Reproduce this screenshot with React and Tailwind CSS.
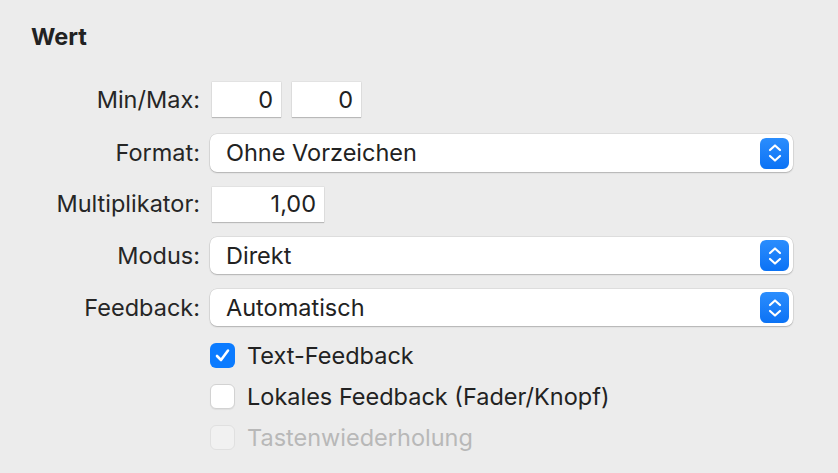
import React from "react";

const font = { fontFamily: "Inter, 'Liberation Sans', sans-serif" };

function Stepper() {
  return (
    <div className="w-[29px] h-[31px] rounded-[6px] bg-gradient-to-b from-[#2a8dfd] to-[#0a72f5] flex items-center justify-center">
      <svg width="16" height="22" viewBox="0 0 16 22" fill="none">
        <path d="M3 8 L8 3.5 L13 8" stroke="white" strokeWidth="2.2" strokeLinecap="round" strokeLinejoin="round" />
        <path d="M3 14 L8 18.5 L13 14" stroke="white" strokeWidth="2.2" strokeLinecap="round" strokeLinejoin="round" />
      </svg>
    </div>
  );
}

function Select({ value, height = "h-[38px]" }) {
  return (
    <div className={`${height} w-[583px] bg-white rounded-[7px] shadow-[0_0_0_0.5px_rgba(0,0,0,0.12),0_1px_1.5px_rgba(0,0,0,0.2)] flex items-center justify-between pl-[16px] pr-[4px]`}>
      <span className="text-[23.5px] text-[#222]">{value}</span>
      <Stepper />
    </div>
  );
}

function NumField({ value, width }) {
  return (
    <div className={`${width} h-[35px] bg-white shadow-[0_0_0_0.5px_rgba(0,0,0,0.08),0_1px_1px_rgba(0,0,0,0.18)] flex items-center justify-end pr-[8px] text-[23.5px] text-[#222]`}>
      {value}
    </div>
  );
}

function Row({ label, children, className = "", inset = "ml-[9px]" }) {
  return (
    <div className={`flex items-center ${className}`}>
      <div className="w-[170px] text-right text-[23.5px] text-[#262626] pr-[1px] whitespace-nowrap">{label}</div>
      <div className={`${inset} flex items-center gap-[11px]`}>{children}</div>
    </div>
  );
}

function Check({ label, state }) {
  let box;
  if (state === "checked") {
    box = (
      <div className="w-[25px] h-[25px] rounded-[6px] bg-[#0b7bff] flex items-center justify-center">
        <svg width="17" height="17" viewBox="0 0 17 17" fill="none">
          <path d="M3 9 L7 13 L14 3.5" stroke="white" strokeWidth="2.6" strokeLinecap="round" strokeLinejoin="round" />
        </svg>
      </div>
    );
  } else if (state === "disabled") {
    box = <div className="w-[25px] h-[25px] rounded-[6px] bg-[#f1f1f1] border border-[#e0e0e0]" />;
  } else {
    box = <div className="w-[25px] h-[25px] rounded-[6px] bg-white border border-[#d2d2d2] shadow-[0_1px_1px_rgba(0,0,0,0.06)]" />;
  }
  return (
    <div className="flex items-center h-[25px] pl-[179px]">
      {box}
      <span className={`ml-[12px] text-[23.5px] ${state === "disabled" ? "text-[#b8b8b8]" : "text-[#222]"}`}>{label}</span>
    </div>
  );
}

export default function App() {
  return (
    <div className="w-[838px] h-[473px] bg-[#ececec] overflow-hidden" style={font}>
      <div className="pl-[31px] pt-[22px] h-[82px]">
        <h2 className="text-[23.5px] font-bold text-[#222] leading-[30px]">Wert</h2>
      </div>
      <div className="flex flex-col pl-[31px]">
        <Row label="Min/Max:" className="h-[35px]" inset="ml-[11px]">
          <NumField value="0" width="w-[69px]" />
          <NumField value="0" width="w-[69px]" />
        </Row>
        <Row label="Format:" className="h-[38px] mt-[17px]">
          <Select value="Ohne Vorzeichen" />
        </Row>
        <Row label="Multiplikator:" className="h-[36px] mt-[14px]" inset="ml-[11px]">
          <NumField value="1,00" width="w-[112px]" />
        </Row>
        <Row label="Modus:" className="h-[37px] mt-[15px]">
          <Select value="Direkt" height="h-[37px]" />
        </Row>
        <Row label="Feedback:" className="h-[37px] mt-[15px]">
          <Select value="Automatisch" height="h-[37px]" />
        </Row>
        <div className="mt-[17px] flex flex-col gap-[16px]">
          <Check label="Text-Feedback" state="checked" />
          <Check label="Lokales Feedback (Fader/Knopf)" state="unchecked" />
          <Check label="Tastenwiederholung" state="disabled" />
        </div>
      </div>
    </div>
  );
}
